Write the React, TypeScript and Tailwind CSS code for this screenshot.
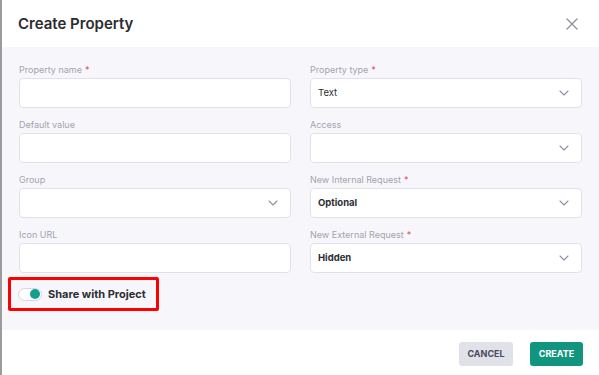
import React from "react";

const Chevron = () => (
  <svg width="10" height="6" viewBox="0 0 10 6" fill="none" className="shrink-0">
    <path d="M1 1l4 4 4-4" stroke="#8a94a6" strokeWidth="1.1" strokeLinecap="round" strokeLinejoin="round" />
  </svg>
);

const Label = ({ text, req }: { text: string; req?: boolean }) => (
  <div className="h-[10px] mb-[3px] text-[9px] leading-[10px] text-[#a3a3ad]">
    {text}
    {req && <span className="text-[#e5484d] ml-[3px]">*</span>}
  </div>
);

const Input = () => <div className="h-[30px] bg-white border border-[#e1e1ea] rounded-[4px]" />;

const Select = ({ value, bold }: { value?: string; bold?: boolean }) => (
  <div className="h-[30px] bg-white border border-[#e1e1ea] rounded-[4px] flex items-center justify-between pl-[7px] pr-[12px]">
    <span className={`text-[9.5px] pt-[1px] text-[#2d2d33] ${bold ? "font-bold" : ""}`}>{value ?? ""}</span>
    <Chevron />
  </div>
);

const Field = ({ label, req, children }: { label: string; req?: boolean; children: React.ReactNode }) => (
  <div className="flex flex-col">
    <Label text={label} req={req} />
    {children}
  </div>
);

export default function App() {
  return (
    <div
      className="w-[599px] h-[375px] bg-white border-l-2 border-[#9b9b9b] flex flex-col overflow-hidden"
      style={{ fontFamily: "Inter, 'Noto Sans', sans-serif" }}
    >
      <div className="h-[47px] shrink-0 flex items-center justify-between pl-[16px] pr-[21px] pt-[1px]">
        <div className="text-[15px] font-semibold text-[#2b2b30]">Create Property</div>
        <svg width="12" height="12" viewBox="0 0 12 12">
          <path d="M1 1l10 10M11 1L1 11" stroke="#8f8f9c" strokeWidth="1.3" strokeLinecap="round" />
        </svg>
      </div>
      <div className="h-[283px] shrink-0 bg-[#f7f7fb] pt-[18px] pl-[17px] pr-[17px]">
        <div className="grid grid-cols-2 gap-x-[19px] gap-y-[12px]">
          <Field label="Property name" req>
            <Input />
          </Field>
          <Field label="Property type" req>
            <Select value="Text" />
          </Field>
          <Field label="Default value">
            <Input />
          </Field>
          <Field label="Access">
            <Select />
          </Field>
          <Field label="Group">
            <Select />
          </Field>
          <Field label="New Internal Request" req>
            <Select value="Optional" bold />
          </Field>
          <Field label="Icon URL">
            <Input />
          </Field>
          <Field label="New External Request" req>
            <Select value="Hidden" bold />
          </Field>
        </div>
        <div className="mt-[4px] -ml-[11px] w-[151px] h-[34px] border-[3px] border-[#ff0000] rounded-[2px] flex items-center pl-[7px] gap-[6px]">
          <div className="w-[24px] h-[13px] rounded-full bg-white border border-[#d6d6de] flex items-center justify-end pr-[1px]">
            <div className="w-[10px] h-[10px] rounded-full bg-[#14a08e]" />
          </div>
          <span className="text-[11px] font-bold text-[#2d2d33]">Share with Project</span>
        </div>
      </div>
      <div className="flex-1 flex items-start justify-end gap-[17px] pt-[12px] pr-[16px]">
        <div className="w-[54px] h-[24px] rounded-[3px] bg-[#e1e1ea] flex items-center justify-center text-[9px] font-bold text-[#4a4a5a]">
          CANCEL
        </div>
        <div className="w-[53px] h-[24px] rounded-[3px] bg-[#12957f] flex items-center justify-center text-[9px] font-bold text-white">
          CREATE
        </div>
      </div>
    </div>
  );
}
